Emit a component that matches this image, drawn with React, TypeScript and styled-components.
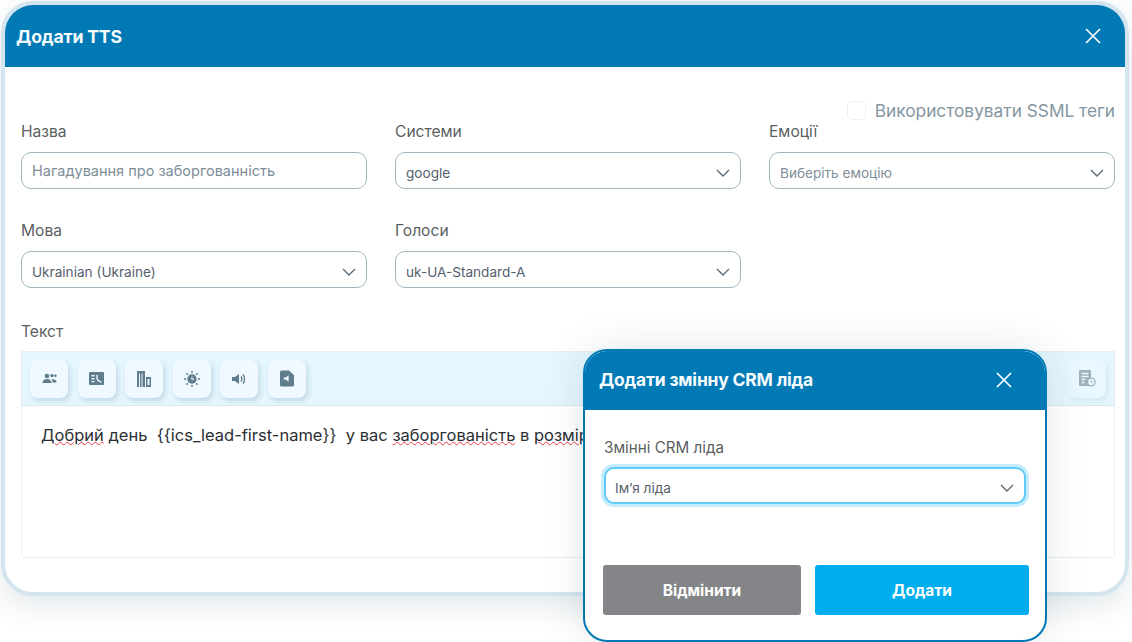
import React from "react";
import styled, { createGlobalStyle } from "styled-components";

const Global = createGlobalStyle`
  html, body { margin: 0; padding: 0; background: #fff; }
  * { box-sizing: border-box; }
  body { font-family: Inter, "Noto Sans", "Liberation Sans", sans-serif; }
`;

const Page = styled.div`
  position: relative;
  width: 1132px;
  height: 642px;
  overflow: hidden;
  padding: 1px 2px 0 1px;
  background: #fff;
`;

const Modal = styled.div`
  width: 1128px;
  height: 595px;
  border: 4px solid #d3e5ef;
  border-radius: 32px;
  background: #fff;
  overflow: hidden;
  box-shadow: 0 10px 30px rgba(60, 90, 110, 0.14);
`;

const Header = styled.div<{ $h: number; $left: number; $right: number; $lift?: number }>`
  height: ${(p) => p.$h}px;
  background: #0079b5;
  display: flex;
  align-items: center;
  justify-content: space-between;
  padding: 0 ${(p) => p.$right}px ${(p) => p.$lift ?? 0}px ${(p) => p.$left}px;
  color: #fff;
`;

const Title = styled.div<{ $size: number }>`
  font-size: ${(p) => p.$size}px;
  font-weight: 700;
  letter-spacing: -0.2px;
  color: #f6fbfe;
`;

const Body = styled.div`
  padding: 0 10px 0 16px;
`;

const CheckRow = styled.div`
  display: flex;
  justify-content: flex-end;
  align-items: center;
  gap: 9px;
  height: 20px;
  margin-top: 33px;
`;

const Check = styled.span`
  width: 19px;
  height: 19px;
  border: 1px solid #eef1f3;
  border-radius: 5px;
  background: #fff;
`;

const CheckLabel = styled.span`
  font-size: 17.3px;
  color: #8496a1;
`;

const Grid = styled.div`
  display: grid;
  grid-template-columns: repeat(3, 346px);
  column-gap: 28px;
  row-gap: 31px;
  margin-top: 1px;
`;

const Field = styled.div`
  display: flex;
  flex-direction: column;
`;

const Label = styled.label`
  font-size: 15.6px;
  line-height: 20px;
  height: 31px;
  padding-top: 1px;
  color: #5c5f62;
`;

const Control = styled.div<{ $focus?: boolean; $input?: boolean }>`
  height: 37px;
  display: flex;
  align-items: center;
  justify-content: space-between;
  padding: ${(p) => (p.$input ? 0 : 4)}px 10px 0 ${(p) => (p.$focus ? 9 : 10)}px;
  background: #fff;
  border-radius: 10px;
  border: ${(p) => (p.$focus ? "2px solid #5fcbf8" : "1px solid #a3b6c0")};
  box-shadow: ${(p) => (p.$focus ? "0 0 0 3px #c4ecfd" : "none")};
`;

const ControlText = styled.span<{ $muted?: boolean; $input?: boolean }>`
  font-size: ${(p) => (p.$input ? 14.5 : 13.6)}px;
  color: ${(p) => (p.$muted ? "#7e8e99" : "#56606c")};
`;

const TextLabel = styled(Label)`
  display: block;
  margin-top: 33px;
  height: 30px;
`;

const Editor = styled.div`
  height: 207px;
  border: 1px solid #e8eef1;
  border-radius: 0 0 4px 4px;
`;

const Toolbar = styled.div`
  height: 54px;
  background: #e4f6fe;
  border-bottom: 1px solid #dde8ee;
  display: flex;
  align-items: center;
  justify-content: space-between;
  padding: 0 8px 0 8px;
`;

const ToolGroup = styled.div`
  display: flex;
  gap: 9.5px;
`;

const ToolButton = styled.div<{ $faint?: boolean }>`
  width: 38px;
  height: 38px;
  border-radius: 8px;
  background: ${(p) => (p.$faint ? "#e9f7fe" : "#eff9ff")};
  display: flex;
  align-items: center;
  justify-content: center;
  box-shadow: 2px 3px 5px ${(p) => (p.$faint ? "rgba(120, 160, 185, 0.14)" : "rgba(120, 160, 185, 0.32)")};
`;

const EditorText = styled.div`
  padding: 16px 19px;
  font-size: 16.5px;
  line-height: 26px;
  white-space: pre;
  color: #2b2f33;
  overflow: hidden;
`;

const Misspelt = styled.span`
  text-decoration: underline wavy #e8394a 1px;
  text-underline-offset: 0px;
`;

const Dialog = styled.div`
  position: absolute;
  left: 583px;
  top: 349px;
  width: 464px;
  height: 293px;
  background: #fff;
  border: 2px solid #0079b5;
  border-radius: 24px;
  overflow: hidden;
  box-shadow: 0 0 40px rgba(60, 80, 95, 0.14);
`;

const DialogBody = styled.div`
  padding: 26px 19px 0 19px;
`;

const DialogLabel = styled(Label)`
  display: block;
  height: 31px;
  padding-top: 2px;
  font-size: 15.2px;
`;

const Buttons = styled.div`
  display: grid;
  grid-template-columns: 198px 214px;
  column-gap: 14px;
  margin: 61px 0 0 -1px;
`;

const Button = styled.button<{ $tone: string }>`
  height: 50px;
  border: 0;
  border-radius: 3px;
  background: ${(p) => p.$tone};
  color: #fff;
  font: 700 15.5px Inter, sans-serif;
`;

const Chevron = () => (
  <svg width="14" height="14" viewBox="0 0 14 14" fill="none" stroke="#5b6b78" strokeWidth="1.4">
    <path d="M1 4l6 6 6-6" />
  </svg>
);

const Close = () => (
  <svg width="16" height="16" viewBox="0 0 16 16" fill="none" stroke="#fff" strokeWidth="1.7">
    <path d="M1 1l14 14M15 1L1 15" />
  </svg>
);

const ic = "#5f7d8c";

const People = () => (
  <svg width="15" height="11" viewBox="0 0 15 11" fill={ic}>
    <circle cx="5" cy="3" r="2.3" />
    <path d="M0.5 10c0-2.6 2-4 4.5-4s4.500 1.400 4.500 4z" />
    <circle cx="10" cy="2.600" r="1.700" />
    <path d="M10.500 9.500h4.200c0-2.300-1.900-3.300-3.900-3.300-.6 0-1.100.1-1.500.3 1 .7 1.200 1.800 1.200 3z" />
    <circle cx="13.500" cy="2.700" r="1.200" />
  </svg>
);

const Card = () => (
  <svg width="15" height="13" viewBox="0 0 15 13">
    <rect width="15" height="13" rx="1" fill={ic} />
    <path d="M2.500 3h3v1.500h-3zM2.500 6h3v1.500h-3zM2.500 9h3v1.200h-3z" fill="#eff9ff" />
    <path d="M8 3v2.500c0 2 1.500 4 4.500 4.500" fill="none" stroke="#eff9ff" strokeWidth="1.400" />
  </svg>
);

const Building = () => (
  <svg width="14" height="16" viewBox="0 0 14 16" fill={ic}>
    <path d="M0 0h8v16H5.500V2.500h-1V16H3V2.500H2V16H0z" />
    <path d="M9 6h5v10H9zM10.500 8v6h2V8z" fillRule="evenodd" />
  </svg>
);

const Sun = () => (
  <svg width="16" height="16" viewBox="0 0 15 15" fill={ic} stroke={ic}>
    <circle cx="7.500" cy="7.500" r="4.400" stroke="none" />
    <path
      d="M7.500 0v2M7.500 13v2M0 7.500h2M13 7.500h2M2.200 2.200l1.400 1.400M11.400 11.400l1.400 1.400M12.800 2.200l-1.400 1.400M3.600 11.400l-1.400 1.400"
      strokeWidth="1.300"
    />
    <path d="M7.500 5.500v2.300h2" fill="none" stroke="#eff9ff" strokeWidth="1" />
  </svg>
);

const Speaker = () => (
  <svg width="14" height="12" viewBox="0 0 14 12" fill={ic}>
    <path d="M0 4h2.800L7 1v10L2.800 8H0z" />
    <path d="M9 3.500c1.100 1.300 1.100 3.700 0 5M11 1.500c2 2.400 2 6.600 0 9" fill="none" stroke={ic} strokeWidth="1.300" />
  </svg>
);

const FileAudio = () => (
  <svg width="14" height="17" viewBox="0 0 13 15">
    <path d="M1.500 0H8.500L13 4.500V13.500A1.500 1.500 0 0 1 11.500 15H1.500A1.500 1.500 0 0 1 0 13.500V1.500A1.500 1.500 0 0 1 1.500 0z" fill={ic} />
    <path d="M3.500 6.500h1.700L8 4.500v6L5.200 8.500H3.500z" fill="#eff9ff" />
  </svg>
);

const FileClock = () => (
  <svg width="17" height="17" viewBox="0 0 17 17">
    <path d="M1 0h10a1 1 0 0 1 1 1v15H1a1 1 0 0 1-1-1V1a1 1 0 0 1 1-1z" fill="#9fb2bc" />
    <path d="M2.500 3.500h7M2.500 6.500h7M2.500 9.500h4M2.500 12.500h3" stroke="#e9f7fe" strokeWidth="1.300" />
    <circle cx="12.300" cy="12" r="3.800" fill="#e9f7fe" stroke="#9fb2bc" strokeWidth="1.300" />
    <path d="M12.300 10.500V12h1.500" fill="none" stroke="#9fb2bc" strokeWidth="1" />
  </svg>
);

export default function App() {
  return (
    <Page>
      <Global />
      <Modal>
        <Header $h={62} $left={11} $right={24}>
          <Title $size={17.7}>Додати TTS</Title>
          <Close />
        </Header>
        <Body>
          <CheckRow>
            <Check />
            <CheckLabel>Використовувати SSML теги</CheckLabel>
          </CheckRow>
          <Grid>
            <Field>
              <Label>Назва</Label>
              <Control $input>
                <ControlText $muted $input>Нагадування про заборгованність</ControlText>
              </Control>
            </Field>
            <Field>
              <Label>Системи</Label>
              <Control>
                <ControlText>google</ControlText>
                <Chevron />
              </Control>
            </Field>
            <Field>
              <Label>Емоції</Label>
              <Control>
                <ControlText $muted>Виберіть емоцію</ControlText>
                <Chevron />
              </Control>
            </Field>
            <Field>
              <Label>Мова</Label>
              <Control>
                <ControlText>Ukrainian (Ukraine)</ControlText>
                <Chevron />
              </Control>
            </Field>
            <Field>
              <Label>Голоси</Label>
              <Control>
                <ControlText>uk-UA-Standard-A</ControlText>
                <Chevron />
              </Control>
            </Field>
          </Grid>
          <TextLabel>Текст</TextLabel>
          <Editor>
            <Toolbar>
              <ToolGroup>
                <ToolButton><People /></ToolButton>
                <ToolButton><Card /></ToolButton>
                <ToolButton><Building /></ToolButton>
                <ToolButton><Sun /></ToolButton>
                <ToolButton><Speaker /></ToolButton>
                <ToolButton><FileAudio /></ToolButton>
              </ToolGroup>
              <ToolButton $faint><FileClock /></ToolButton>
            </Toolbar>
            <EditorText>
              <Misspelt>Добрий</Misspelt> день  {"{{ics_lead-first-name}}"}  у вас <Misspelt>заборгованість</Misspelt> в <Misspelt>розмірі</Misspelt>
            </EditorText>
          </Editor>
        </Body>
      </Modal>
      <Dialog>
        <Header $h={59} $left={14} $right={33} $lift={2}>
          <Title $size={17.5}>Додати змінну CRM ліда</Title>
          <Close />
        </Header>
        <DialogBody>
          <DialogLabel>Змінні CRM ліда</DialogLabel>
          <Control $focus>
            <ControlText>Ім’я ліда</ControlText>
            <Chevron />
          </Control>
          <Buttons>
            <Button $tone="#848589">Відмінити</Button>
            <Button $tone="#00aeef">Додати</Button>
          </Buttons>
        </DialogBody>
      </Dialog>
    </Page>
  );
}
